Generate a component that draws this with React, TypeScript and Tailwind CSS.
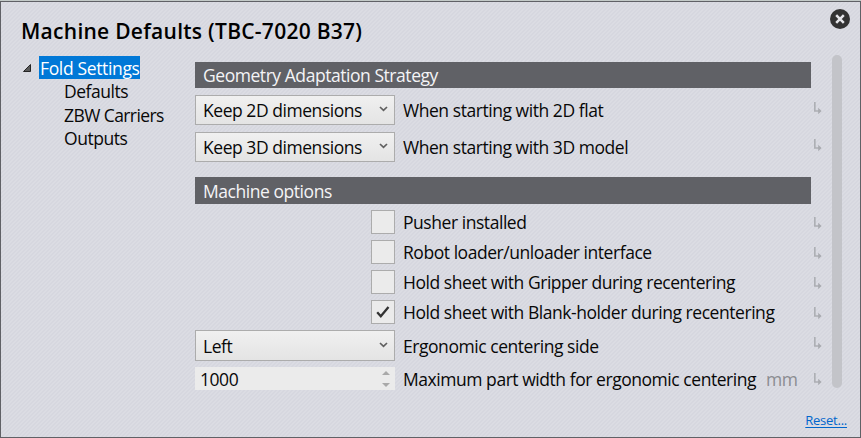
import React from "react";

function Arrow({ className = "" }: { className?: string }) {
  return (
    <svg className={`ml-[4px] h-[13px] w-[8px] shrink-0 ${className}`} viewBox="0 0 8 13" fill="none">
      <path d="M.8 0V9H5" stroke="#adafb4" strokeWidth="1.7" />
      <path d="M4.2 5.7L7.6 9L4.2 12.3Z" fill="#a9abb0" />
    </svg>
  );
}

function Bar({ children, className }: { children: React.ReactNode; className: string }) {
  return (
    <div className={`flex w-[616px] items-center bg-[#606166] pl-[8px] text-[#f4f4f6] ${className}`}>
      {children}
    </div>
  );
}

function Combo({ children, className = "h-[30px]" }: { children: React.ReactNode; className?: string }) {
  return (
    <div className={`flex w-[200px] shrink-0 items-center justify-between border border-[#acacac] bg-linear-to-b from-[#f0f0f0] to-[#e4e4e4] pr-[6px] pl-[7px] ${className}`}>
      <span>{children}</span>
      <svg className="mb-[3px] h-[6px] w-[9px]" viewBox="0 0 9 6" fill="none">
        <path d="M1 1L4.5 4.4L8 1" stroke="#606060" strokeWidth="1.7" />
      </svg>
    </div>
  );
}

function Check({ on = false }: { on?: boolean }) {
  return (
    <div className="ml-[176px] flex h-[24px] w-[24px] shrink-0 items-center justify-center border border-[#acacac] bg-[#ebebeb]">
      {on && (
        <svg className="h-[12px] w-[14px]" viewBox="0 0 14 12" fill="none">
          <path d="M1.2 6.3L4.8 10.2L12.5 1" stroke="#333" strokeWidth="2.3" />
        </svg>
      )}
    </div>
  );
}

function Row({ control, children, className, arrow }: { control: React.ReactNode; children: React.ReactNode; className: string; arrow?: string }) {
  return (
    <div className={`flex items-center ${className}`}>
      {control}
      <div className="ml-[8px] w-[407px]">{children}</div>
      <Arrow className={arrow} />
    </div>
  );
}

export default function App() {
  return (
    <div className="h-[438px] w-[861px] overflow-hidden border-t border-[#c3cac8] bg-[#dadbe3] font-['Open_Sans','Noto_Sans',sans-serif] text-[17.5px] leading-[23px] tracking-[-0.45px] whitespace-nowrap text-[#080808]">
      <div className="flex h-[437px] flex-col border border-[#606166] bg-[linear-gradient(135deg,#dbdce3_25%,#d6d7df_25%,#d6d7df_50%,#dbdce3_50%,#dbdce3_75%,#d6d7df_75%)] bg-size-[4px_4px]">
        <header className="flex h-[53px] items-start justify-between pr-[10px] pl-[20px]">
          <h1 className="mt-[15px] text-[21px] leading-[28px] font-semibold tracking-[0.27px] text-black">Machine Defaults (TBC-7020 B37)</h1>
          <svg className="mt-[7px] h-[20px] w-[20px]" viewBox="0 0 20 20">
            <circle cx="10" cy="10" r="10" fill="#333" />
            <path d="M6.2 6.2L13.8 13.8M13.8 6.2L6.2 13.8" stroke="#e6e6ea" strokeWidth="2.5" />
          </svg>
        </header>
        <main className="flex h-[334px]">
          <nav className="w-[194px] shrink-0 pt-px pl-[22px]">
            <div className="flex items-center">
              <svg className="mr-[8px] h-[8px] w-[8px]" viewBox="0 0 8 8">
                <path d="M7.5.5V7.5H.5Z" fill="#595959" stroke="#262626" strokeWidth="1" />
              </svg>
              <span className="h-[23px] w-[101px] bg-[#0078d7] pl-px leading-[25px] tracking-[-0.35px] text-white">Fold Settings</span>
            </div>
            <div className="pt-px pl-[41px] leading-[23.6px]">
              <div>Defaults</div>
              <div className="tracking-[-0.58px]">ZBW Carriers</div>
              <div>Outputs</div>
            </div>
          </nav>
          <section className="w-[636px] shrink-0 pt-[7px]">
            <Bar className="h-[26px]">Geometry Adaptation Strategy</Bar>
            <Row className="mt-[7px] h-[30px]" arrow="mb-[4px]" control={<Combo>Keep 2D dimensions</Combo>}>When starting with 2D flat</Row>
            <Row className="mt-[7px] h-[30px]" arrow="mb-[4px]" control={<Combo>Keep 3D dimensions</Combo>}>When starting with 3D model</Row>
            <Bar className="mt-[15px] h-[27px] pt-px">Machine options</Bar>
            <Row className="mt-[6px] h-[24px]" arrow="mt-[2px]" control={<Check />}>Pusher installed</Row>
            <Row className="mt-[6px] h-[24px]" arrow="mt-[2px]" control={<Check />}>Robot loader/unloader interface</Row>
            <Row className="mt-[6px] h-[24px]" arrow="mt-[2px]" control={<Check />}>Hold sheet with Gripper during recentering</Row>
            <Row className="mt-[6px] h-[24px]" arrow="mt-[2px]" control={<Check on />}>Hold sheet with Blank-holder during recentering</Row>
            <Row className="mt-[6px] h-[31px]" arrow="mb-[4px]" control={<Combo className="h-[31px] pt-px">Left</Combo>}><div className="pt-[2px]">Ergonomic centering side</div></Row>
            <Row
              className="mt-[6px] h-[23px]"
              arrow="mt-[2px]"
              control={
                <div className="flex h-[23px] w-[200px] shrink-0 items-center justify-between bg-[#ebebeb] pr-[5px] pl-[5px]">
                  <span className="pt-px">1000</span>
                  <svg className="h-[16px] w-[8px]" viewBox="0 0 8 16" fill="#a9a9a9">
                    <path d="M0 4L4 0L8 4ZM0 12H8L4 16Z" />
                  </svg>
                </div>
              }
            >
              <div className="flex pt-px"><span className="w-[363px]">Maximum part width for ergonomic centering</span><span className="text-[#8b8c91]">mm</span></div>
            </Row>
          </section>
          <div className="ml-px h-[333px] w-[10px] rounded-full bg-[#c3c4c9]" />
        </main>
        <footer className="flex justify-end pt-[22px] pr-[13px]">
          <a className="text-[13px] leading-[18px] tracking-[-0.25px] text-[#0066cc] underline underline-offset-2">Reset...</a>
        </footer>
      </div>
    </div>
  );
}
